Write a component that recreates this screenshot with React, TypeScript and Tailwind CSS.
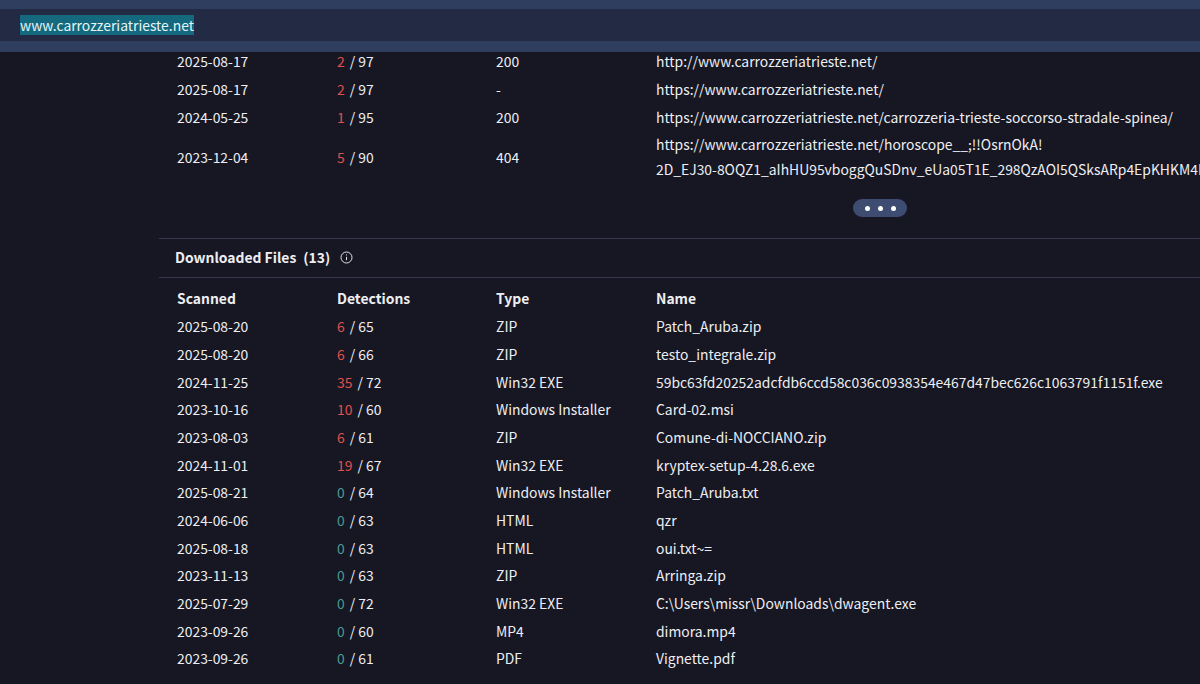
const urlRows = [
  { date: "2025-08-17", hits: "2", total: "97", status: "200", url: "http://www.carrozzeriatrieste.net/" },
  { date: "2025-08-17", hits: "2", total: "97", status: "-", url: "https://www.carrozzeriatrieste.net/" },
  { date: "2024-05-25", hits: "1", total: "95", status: "200", url: "https://www.carrozzeriatrieste.net/carrozzeria-trieste-soccorso-stradale-spinea/" },
];

const files = [
  { date: "2025-08-20", hits: "6", total: "65", type: "ZIP", name: "Patch_Aruba.zip" },
  { date: "2025-08-20", hits: "6", total: "66", type: "ZIP", name: "testo_integrale.zip" },
  { date: "2024-11-25", hits: "35", total: "72", type: "Win32 EXE", name: "59bc63fd20252adcfdb6ccd58c036c0938354e467d47bec626c1063791f1151f.exe" },
  { date: "2023-10-16", hits: "10", total: "60", type: "Windows Installer", name: "Card-02.msi" },
  { date: "2023-08-03", hits: "6", total: "61", type: "ZIP", name: "Comune-di-NOCCIANO.zip" },
  { date: "2024-11-01", hits: "19", total: "67", type: "Win32 EXE", name: "kryptex-setup-4.28.6.exe" },
  { date: "2025-08-21", hits: "0", total: "64", type: "Windows Installer", name: "Patch_Aruba.txt" },
  { date: "2024-06-06", hits: "0", total: "63", type: "HTML", name: "qzr" },
  { date: "2025-08-18", hits: "0", total: "63", type: "HTML", name: "oui.txt~=" },
  { date: "2023-11-13", hits: "0", total: "63", type: "ZIP", name: "Arringa.zip" },
  { date: "2025-07-29", hits: "0", total: "72", type: "Win32 EXE", name: "C:\\Users\\missr\\Downloads\\dwagent.exe" },
  { date: "2023-09-26", hits: "0", total: "60", type: "MP4", name: "dimora.mp4" },
  { date: "2023-09-26", hits: "0", total: "61", type: "PDF", name: "Vignette.pdf" },
];

const Detections = ({ hits, total }: { hits: string; total: string }) => (
  <span>
    <span className={hits === "0" ? "text-[#4a9a92]" : "text-[#e0504f]"}>{hits}</span>
    <span className="ml-[5px]">/ {total}</span>
  </span>
);

const App = () => {
  return (
    <div className="h-[684px] w-[1200px] overflow-hidden bg-[#161723] font-['Noto_Sans_CJK_JP','Noto_Sans',sans-serif] text-[13.9px] text-[#eeeef2]">
      {/* Search bar */}
      <div className="h-[52px] bg-[#2f3d5e] pt-[9px]">
        <div className="flex h-[32px] items-center bg-[#232b44] pl-5">
          <span className="bg-[#14697f] leading-[20px] text-[#e6f4f6]">www.carrozzeriatrieste.net</span>
        </div>
      </div>

      <div className="ml-[159px]">
        {/* URLs */}
        <div className="-mt-[5px] pl-[18px]">
          {urlRows.map((r, i) => (
            <div key={i} className="grid h-[28px] grid-cols-[160px_159px_160px_1fr] items-center whitespace-nowrap">
              <div>{r.date}</div>
              <div><Detections hits={r.hits} total={r.total} /></div>
              <div>{r.status}</div>
              <div>{r.url}</div>
            </div>
          ))}
          <div className="grid h-[52px] grid-cols-[160px_159px_160px_1fr] items-center whitespace-nowrap">
            <div>2023-12-04</div>
            <div><Detections hits="5" total="90" /></div>
            <div>404</div>
            <div className="leading-[25px]">
              <div>https://www.carrozzeriatrieste.net/horoscope__;!!OsrnOkA!</div>
              <div>2D_EJ30-8OQZ1_aIhHU95vboggQuSDnv_eUa05T1E_298QzAOI5QSksARp4EpKHKM4I</div>
            </div>
          </div>
        </div>

        <div className="flex h-[48px] items-center justify-end pr-[293px] pt-[2px]">
          <div className="flex h-[18px] w-[54px] items-center justify-center gap-2 rounded-full bg-[#3f4c72]">
            <span className="size-[5px] rounded-full bg-white" />
            <span className="size-[5px] rounded-full bg-white" />
            <span className="size-[5px] rounded-full bg-white" />
          </div>
        </div>

        {/* Downloaded files */}
        <div className="mt-[7px] flex h-[40px] items-center border-y border-[#353850] pb-[2px] pl-4">
          <span className="font-bold">Downloaded Files</span>
          <span className="ml-[7px] font-bold">(13)</span>
          <svg className="ml-[10px]" width="13" height="13" viewBox="0 0 13 13" fill="none" stroke="#e4e4ea" strokeWidth="1">
            <circle cx="6.5" cy="6.5" r="5.5" />
            <path d="M6.5 5.8v3.4" />
            <path d="M6.5 3.4v1" />
          </svg>
        </div>

        <div className="pl-[18px]">
          <div className="grid h-[35px] grid-cols-[160px_159px_160px_1fr] items-center pt-[5px] font-bold">
            <div>Scanned</div>
            <div>Detections</div>
            <div>Type</div>
            <div>Name</div>
          </div>
          {files.map((f, i) => (
            <div key={i} className="grid h-[27.67px] grid-cols-[160px_159px_160px_1fr] items-center whitespace-nowrap">
              <div>{f.date}</div>
              <div><Detections hits={f.hits} total={f.total} /></div>
              <div>{f.type}</div>
              <div>{f.name}</div>
            </div>
          ))}
        </div>
      </div>
    </div>
  );
};

export default App;
